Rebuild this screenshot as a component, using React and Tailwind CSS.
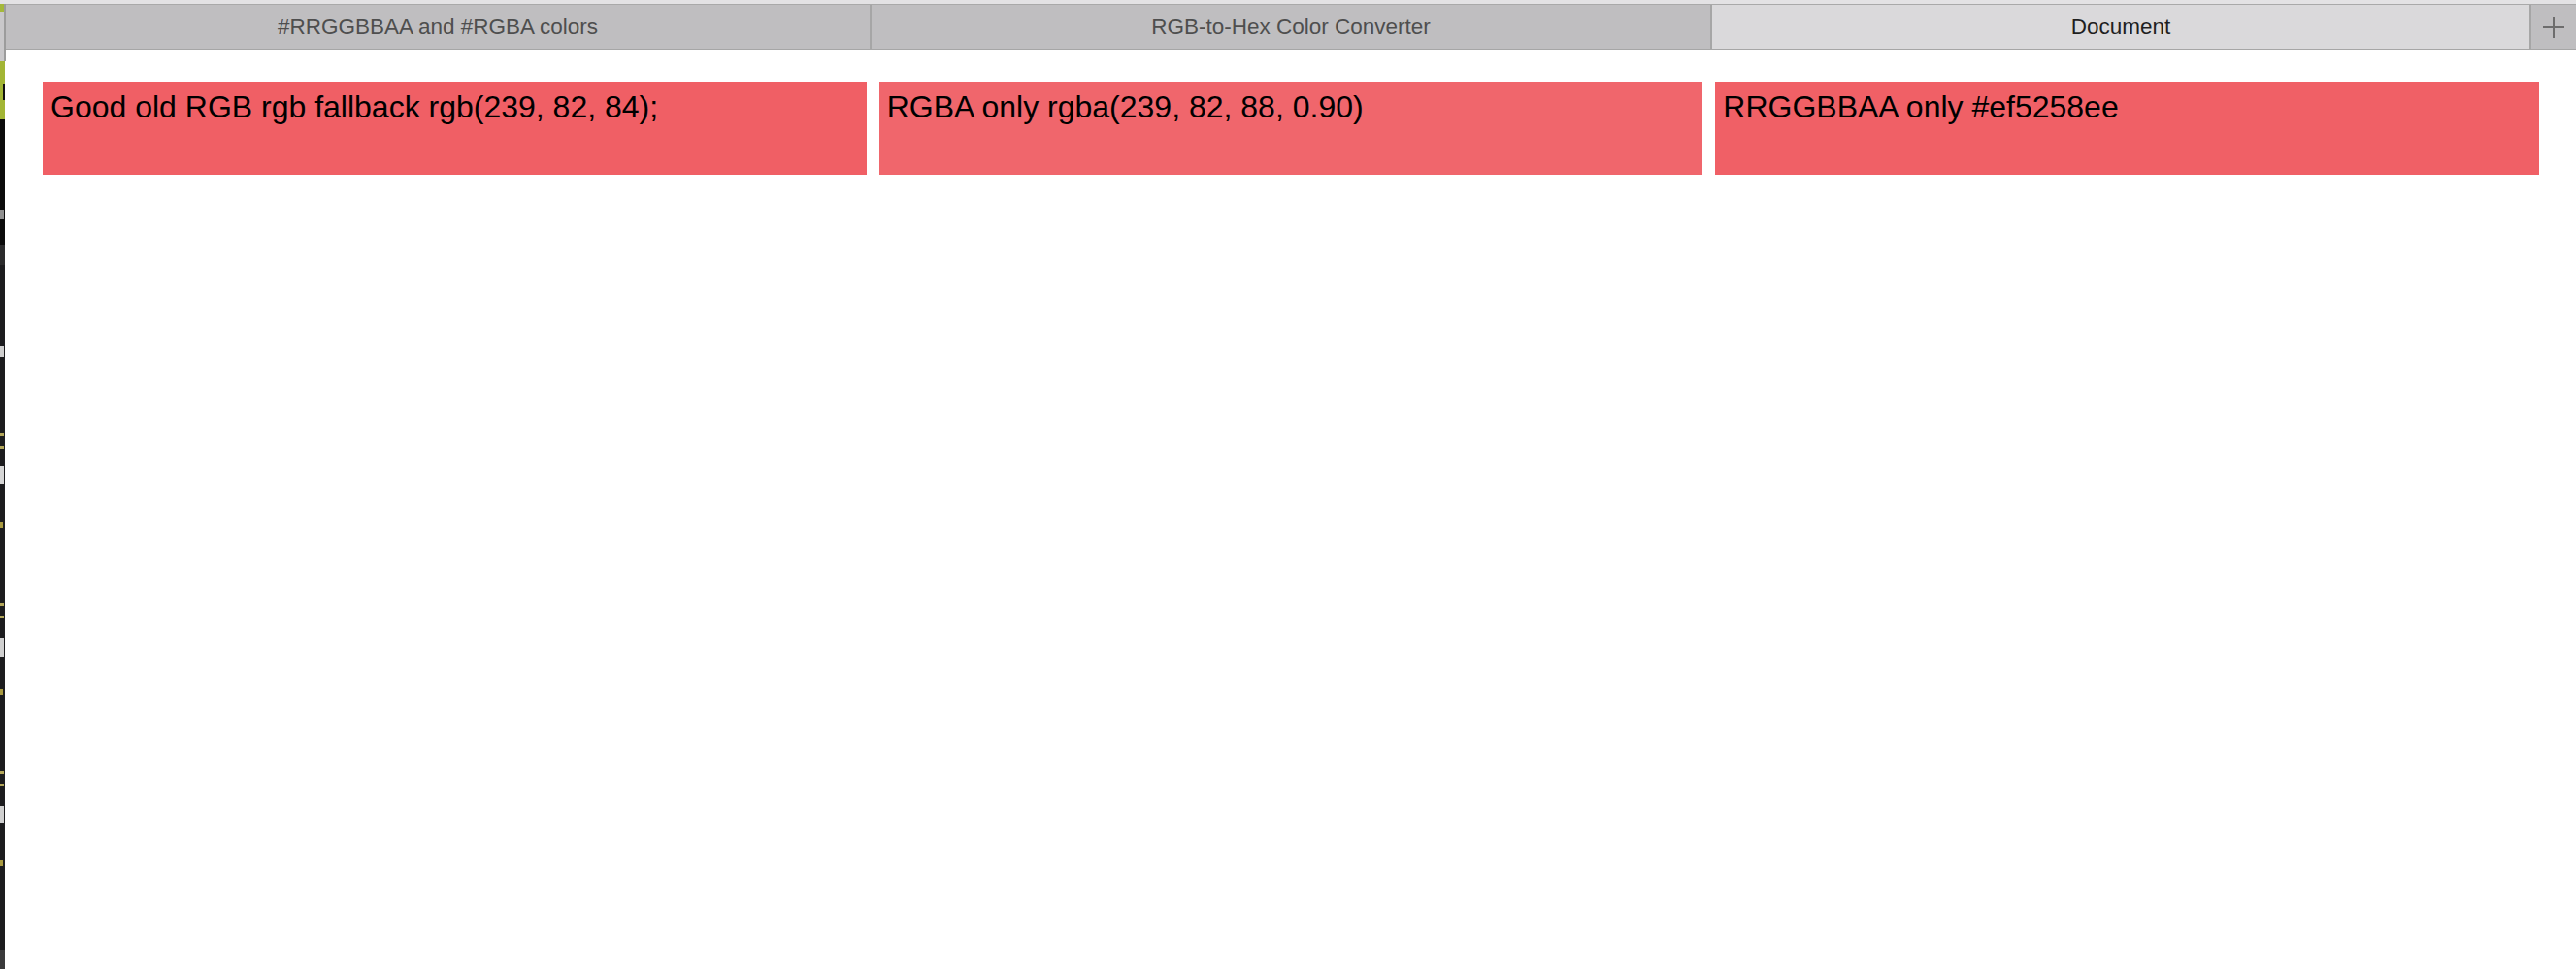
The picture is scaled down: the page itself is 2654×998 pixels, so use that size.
import React from 'react';

// bits of the code editor peeking out behind the browser window
const editorMarks = [
  { top: 216, h: 10, w: 4, color: '#8f8f8f' },
  { top: 356, h: 12, w: 4, color: '#cfcfcf' },
  { top: 446, h: 3, w: 4, color: '#b3a75a' },
  { top: 459, h: 3, w: 4, color: '#b3a75a' },
  { top: 480, h: 18, w: 4, color: '#d6d6d6' },
  { top: 538, h: 6, w: 3, color: '#a89a40' },
  { top: 621, h: 3, w: 4, color: '#b3a75a' },
  { top: 634, h: 3, w: 4, color: '#b3a75a' },
  { top: 657, h: 20, w: 4, color: '#d0d0d0' },
  { top: 710, h: 6, w: 3, color: '#a89a40' },
  { top: 794, h: 3, w: 4, color: '#b3a75a' },
  { top: 807, h: 3, w: 4, color: '#b3a75a' },
  { top: 830, h: 18, w: 4, color: '#d0d0d0' },
  { top: 886, h: 6, w: 3, color: '#a89a40' },
];

function EditorStrip() {
  let y = 273;
  return (
    <div className="flex w-[6px] shrink-0 flex-col">
      <div className="h-[4px] bg-[#e3e2e4]" />
      <div className="flex h-[8px]">
        <div className="w-[4px] bg-[#a4b83a]" />
        <div className="w-[2px] bg-[#9c9c9c]" />
      </div>
      <div className="flex h-[51px]">
        <div className="w-[4px] bg-[#c9c8ca]" />
        <div className="w-[2px] bg-[#9c9c9c]" />
      </div>
      <div className="flex h-[60px] w-[5px] flex-col bg-[#a2b534]">
        <div className="h-[24px]" />
        <div className="ml-[3px] h-[16px] w-[2px] bg-[#111]" />
      </div>
      <div className="flex h-[129px] w-[5px] flex-col bg-[#0b0b0b]">
        <div className="h-[93px]" />
        <div className="h-[10px] w-[4px] bg-[#8f8f8f]" />
      </div>
      <div className="h-[21px] w-[5px] bg-[#2b2b2c]" />
      <div className="flex w-[5px] flex-1 flex-col bg-[#1c1c1e]">
        {editorMarks.slice(1).map((m, i) => {
          const gap = m.top - y;
          y = m.top + m.h;
          return (
            <div
              key={i}
              style={{ marginTop: gap, height: m.h, width: m.w, backgroundColor: m.color }}
            />
          );
        })}
        <div className="flex-1" />
        <div className="h-[20px] w-[5px] bg-[#3a3a3b]" />
      </div>
    </div>
  );
}

function TabBar() {
  return (
    <div className="flex flex-col">
      <div className="h-[4px] bg-[#e3e2e4]" />
      <div className="flex h-[48px] border-t border-b-2 border-t-[#a9a9a9] border-b-[#a6a6a6] bg-[#bfbec0] font-['Liberation_Sans',Arial,sans-serif] text-[22.5px]">
        <div className="flex w-[890px] items-center justify-center text-[#4e4e4e]">
          #RRGGBBAA and #RGBA colors
        </div>
        <div className="w-[2px] bg-[#a6a6a6]" />
        <div className="flex w-[864px] items-center justify-center text-[#4e4e4e]">
          RGB-to-Hex Color Converter
        </div>
        <div className="w-[2px] bg-[#a6a6a6]" />
        <div className="flex w-[842px] items-center justify-center bg-[#dad9db] text-[#1f1f1f]">
          Document
        </div>
        <div className="w-[2px] bg-[#a6a6a6]" />
        <div className="flex flex-1 items-center justify-center">
          <svg width="22" height="22" viewBox="0 0 22 22">
            <path d="M11 0v22M0 11h22" stroke="#6d6d6d" strokeWidth="2" />
          </svg>
        </div>
      </div>
    </div>
  );
}

const boxes = [
  { label: 'Good old RGB rgb fallback rgb(239, 82, 84);', bg: 'bg-[#f05f65]' },
  { label: 'RGBA only rgba(239, 82, 88, 0.90)', bg: 'bg-[#f0666c]' },
  { label: 'RRGGBBAA only #ef5258ee', bg: 'bg-[#f06066]' },
];

export default function App() {
  return (
    <div className="flex h-[998px] w-[2654px] overflow-hidden bg-white">
      <EditorStrip />
      <div className="flex flex-1 flex-col">
        <TabBar />
        <div className="flex-1 bg-white px-[38px] pt-[32px]">
          <div className="grid grid-cols-3 gap-[13px]">
            {boxes.map((b) => (
              <div
                key={b.label}
                className={`h-[96px] p-2 font-['Liberation_Sans',Arial,sans-serif] text-[32px] leading-[36px] text-black ${b.bg}`}
              >
                {b.label}
              </div>
            ))}
          </div>
        </div>
      </div>
    </div>
  );
}
